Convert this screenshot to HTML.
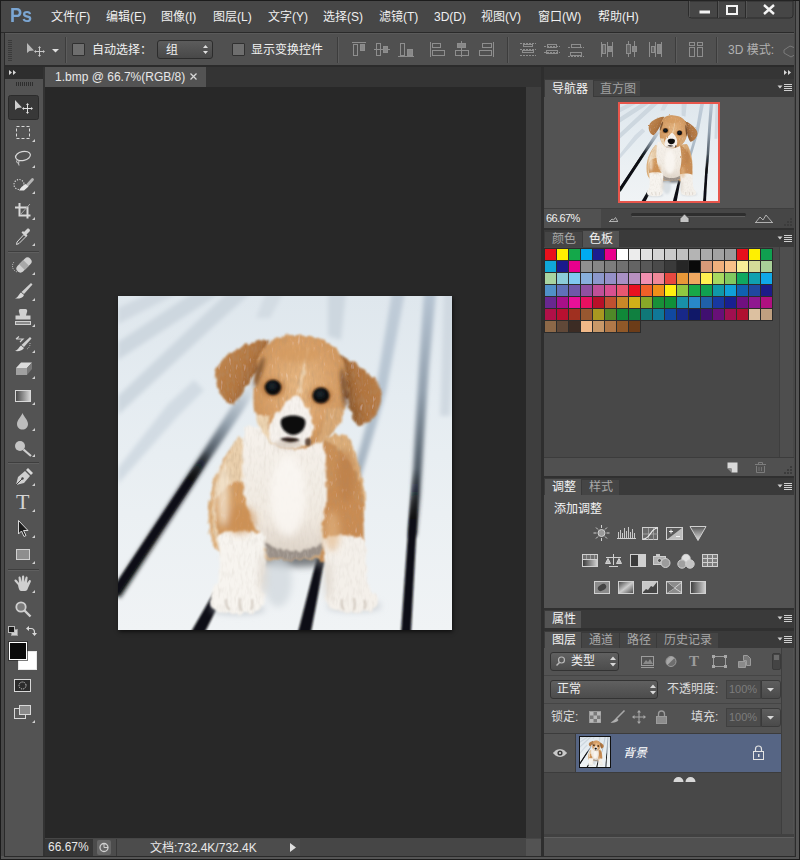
<!DOCTYPE html>
<html lang="zh-CN">
<head>
<meta charset="utf-8">
<title>Photoshop</title>
<style>
html,body{margin:0;padding:0;}
body{width:800px;height:860px;overflow:hidden;background:#474747;position:relative;
 font-family:"Liberation Sans","Noto Sans CJK SC",sans-serif;font-size:12px;color:#e6e6e6;}
.a{position:absolute;}
.t{position:absolute;white-space:nowrap;line-height:16px;}
#win{left:0;top:0;width:800px;height:860px;background:#484848;}
#menubar{left:1px;top:1px;width:798px;height:31px;background:#474747;}
.mi{position:absolute;top:9px;font-size:12px;line-height:16px;color:#f0f0f0;white-space:nowrap;}
#optbar{left:5px;top:33px;width:793px;height:32px;background:#505050;border-top:1px solid #5a5a5a;box-sizing:border-box;}
#canvas{left:45px;top:87px;width:481px;height:751px;background:#282828;}
.tabtxt{color:#b4b4b4;}
.ptabbar{position:absolute;left:545px;width:252px;height:18px;background:#3a3a3a;}
.ptab{position:absolute;top:0;height:18px;background:#535353;color:#f0f0f0;font-size:12px;line-height:18px;text-align:center;}
.ptabi{position:absolute;top:1px;height:17px;background:#434343;color:#a0a0a0;font-size:12px;line-height:17px;text-align:center;}
.pbody{position:absolute;left:545px;width:252px;background:#535353;}
</style>
</head>
<body>
<div id="win" class="a">
 <!-- window edges -->
 <div class="a" style="left:0;top:0;width:800px;height:1px;background:#1c1c1c"></div>
 <div class="a" style="left:0;top:0;width:1px;height:860px;background:#1c1c1c"></div>
 <div class="a" style="left:799px;top:0;width:1px;height:860px;background:#1c1c1c"></div>
 <div class="a" style="left:0;top:859px;width:800px;height:1px;background:#1c1c1c"></div>

 <!-- MENU BAR -->
 <div id="menubar" class="a"></div>
 <div class="t" style="left:10px;top:2px;font-size:21px;line-height:26px;font-weight:bold;color:#7ba6d3;transform-origin:0 0;transform:scaleX(.86)">Ps</div>
 <div class="mi" style="left:51px">文件(F)</div>
 <div class="mi" style="left:106px">编辑(E)</div>
 <div class="mi" style="left:161px">图像(I)</div>
 <div class="mi" style="left:213px">图层(L)</div>
 <div class="mi" style="left:268px">文字(Y)</div>
 <div class="mi" style="left:323px">选择(S)</div>
 <div class="mi" style="left:379px">滤镜(T)</div>
 <div class="mi" style="left:434px">3D(D)</div>
 <div class="mi" style="left:481px">视图(V)</div>
 <div class="mi" style="left:538px">窗口(W)</div>
 <div class="mi" style="left:598px">帮助(H)</div>
 <!-- window controls -->
 

 <div class="a" style="left:1px;top:32px;width:798px;height:1px;background:#2a2a2a"></div>
 <div class="a" style="left:4px;top:33px;width:1px;height:824px;background:#2a2a2a"></div>

 <!-- OPTIONS BAR -->
 <div id="optbar" class="a"></div>
 <div class="a" style="left:5px;top:65px;width:793px;height:2px;background:#2b2b2b"></div>

 <!-- DOC TAB STRIP -->
 <div class="a" style="left:45px;top:67px;width:496px;height:20px;background:#343434"></div>
 <div class="a" style="left:45px;top:67px;width:161px;height:20px;background:#535353"></div>
 <div class="t" style="left:55px;top:69px;color:#e8e8e8;">1.bmp @ 66.7%(RGB/8)</div>

 <!-- TOOLBAR -->
 <div id="tools" class="a" style="left:5px;top:67px;width:38px;height:791px;background:#535353"></div>
 <div class="a" style="left:43px;top:67px;width:2px;height:791px;background:#333"></div>


 <div class="a" style="left:5px;top:67px;width:38px;height:12px;background:#2e2e2e"></div>
 <div class="t" style="left:16px;top:491px;font-family:'Liberation Serif',serif;font-size:22px;line-height:22px;color:#d4d4d4;">T</div>
 <!--TOOLS-->
<svg class="a" id="ticons" style="left:0;top:0;pointer-events:none" width="800" height="860" viewBox="0 0 800 860" fill="none">
<!-- toolbar header >> -->
<path d="M9,70 L12,72.5 L9,75 Z M13,70 L16,72.5 L13,75 Z" fill="#d8d8d8"/>
<!-- grip -->
<g stroke="#2e2e2e" stroke-width="1">
<path d="M16.5,82v4M18.5,82v4M20.5,82v4M22.5,82v4M24.5,82v4M26.5,82v4M28.5,82v4M30.5,82v4M32.5,82v4"/>
</g>
<!-- move tool selected -->
<rect x="8.5" y="95.5" width="30" height="24" rx="2" fill="#383838" stroke="#2b2b2b"/>
<path d="M15,100 L15,110 L17.5,108 L22,107.5 Z" fill="#cfcfcf"/>
<path d="M27.5,104v9M23,108.5h9" stroke="#e0e0e0" stroke-width="1"/>
<path d="M27.5,103 l-1.5,2 h3z M27.5,114 l-1.5,-2 h3z M22,108.5 l2,-1.5 v3z M33,108.5 l-2,-1.5 v3z" fill="#e0e0e0"/>
<!-- sub-tool triangles -->
<g fill="#d0d0d0">
<path d="M35,139v3h-3z"/><path d="M35,165v3h-3z"/><path d="M35,191v3h-3z"/><path d="M35,217v3h-3z"/><path d="M35,243v3h-3z"/>
<path d="M35,272v3h-3z"/><path d="M35,298v3h-3z"/><path d="M35,324v3h-3z"/><path d="M35,350v3h-3z"/><path d="M35,376v3h-3z"/><path d="M35,402v3h-3z"/><path d="M35,428v3h-3z"/><path d="M35,454v3h-3z"/>
<path d="M35,483v3h-3z"/><path d="M35,509v3h-3z"/><path d="M35,535v3h-3z"/><path d="M35,561v3h-3z"/><path d="M35,590v3h-3z"/><path d="M35,720v3h-3z"/>
</g>
<!-- marquee -->
<rect x="16.5" y="126.5" width="13" height="12" stroke="#d8d8d8" stroke-dasharray="3 2"/>
<!-- lasso -->
<ellipse cx="23" cy="156" rx="7.5" ry="4.5" transform="rotate(-12 23 156)" stroke="#d8d8d8" stroke-width="1.2"/>
<path d="M17.5,160 c-1.5,1 -1,3 .5,3 c1.5,0 1.5,-2 0,-2.5 M18.5,163 l.5,2.5" stroke="#d0d0d0" stroke-width="1"/>
<!-- quick select -->
<circle cx="19" cy="184.5" r="5" stroke="#d8d8d8" stroke-width="1.2" stroke-dasharray="1.2 1.4"/>
<path d="M32.5,179.5 L27.5,185" stroke="#b4b4b4" stroke-width="2.8" stroke-linecap="round"/>
<path d="M25.5,184 L28.5,186.5 L24,190.5 L19,190.5 L21.5,187 Z" fill="#e6e6e6"/>
<!-- crop -->
<path d="M19.5,203v12.5h11M15,207.5h12.5v11" stroke="#d8d8d8" stroke-width="2"/>
<path d="M20,215 L30,204" stroke="#aaa" stroke-width="1"/>
<!-- eyedropper -->
<path d="M16.5,244.5 L17,242 L24,234.5 L26,236.5 L19,243.5 Z" stroke="#d8d8d8" stroke-width="1"/>
<path d="M24,232 l3,-3 c1.5,-1.5 4,1 2.5,2.5 l-3,3 l1,1 l-1.5,1.5 l-4.5,-4.5 l1.5,-1.5 Z" fill="#d4d4d4"/>
<!-- separators -->
<g stroke="#3e3e3e"><path d="M8,251.5h31M8,462.5h31M8,569.5h31"/></g>
<g stroke="#5f5f5f"><path d="M8,252.5h31M8,463.5h31M8,570.5h31"/></g>
<!-- heal (bandaid) -->
<g transform="rotate(-45 24 265)"><rect x="15" y="261" width="18" height="8" rx="4" fill="#cfcfcf"/><rect x="21" y="261" width="6" height="8" fill="#a8a8a8"/></g>
<path d="M14,262 a6,6 0 0 0 4,10" stroke="#d0d0d0" stroke-dasharray="1 1.2"/>
<!-- brush -->
<path d="M31,283 L32.5,284.5 L24,294 L21.5,292 Z" fill="#cfcfcf"/>
<path d="M21,292.5 l3,2.5 c-1,3 -5,4 -9,3.5 c3,-1 3.5,-4 6,-6 Z" fill="#d8d8d8"/>
<!-- stamp -->
<path d="M20.5,309 h5 c1.5,0 2,1.5 1.5,3 l-1,3.5 h4.5 v4 h-15 v-4 h4.5 l-1,-3.5 c-.5,-1.5 0,-3 1.5,-3 Z" fill="#cfcfcf"/>
<rect x="15.5" y="321.5" width="15" height="3" fill="#8a8a8a" stroke="#d0d0d0"/>
<!-- history brush -->
<path d="M30,337 L31.5,338.5 L24,347 L21.5,345 Z" fill="#cfcfcf"/>
<path d="M21,345.5 l3,2.5 c-1,2.5 -5,3.5 -9,3 c3,-1 3.5,-3.5 6,-5.5 Z" fill="#d8d8d8"/>
<path d="M16,339 h7 l-3,3 M16,339 l3,-2.5" stroke="#d0d0d0" stroke-width="1.2"/>
<path d="M27,349 a6,6 0 0 0 3,-6" stroke="#c0c0c0" stroke-dasharray="1 1"/>
<!-- eraser -->
<path d="M16,368 L21,362.5 L32,362.5 L27,368 Z" fill="#dcdcdc"/>
<path d="M16,368 H27 V375 H16 Z" fill="#a0a0a0"/>
<path d="M27,368 L32,362.5 V369 L27,375 Z" fill="#787878"/>
<!-- gradient -->
<defs><linearGradient id="tg" x1="0" x2="1"><stop offset="0" stop-color="#444"/><stop offset="1" stop-color="#d8d8d8"/></linearGradient>
<linearGradient id="tg2" x1="0" x2="1"><stop offset="0" stop-color="#e0e0e0"/><stop offset="1" stop-color="#666"/></linearGradient></defs>
<rect x="15.5" y="390.5" width="15" height="11" fill="url(#tg)" stroke="#d8d8d8"/>
<!-- blur drop -->
<path d="M22.5,413 C24,417 28,420 28,424 C28,427.5 25.5,429.5 22.5,429.5 C19.5,429.5 17,427.5 17,424 C17,420 21,417 22.5,413 Z" fill="#bdbdbd"/>
<!-- dodge -->
<circle cx="20" cy="446" r="5" fill="#c4c4c4"/>
<path d="M23.5,449.5 L31,456" stroke="#cfcfcf" stroke-width="2.2"/>
<!-- pen -->
<path d="M16,485 L18,477 L25,471 L30,476 L24,483 Z" fill="#cfcfcf"/>
<path d="M16,485 L22,479" stroke="#444" stroke-width="1"/><circle cx="22.5" cy="478.5" r="1.2" fill="#444"/>
<path d="M26,470 l2,-2 l5,5 l-2,2 Z" fill="#d8d8d8"/>
<!-- path select arrow -->
<path d="M18.5,520.5 V534 L21.5,531 L24,536.5 L26,535.5 L23.5,530.5 H28 Z" fill="#1c1c1c" stroke="#d8d8d8" stroke-width="1"/>
<!-- shape rect -->
<rect x="16.5" y="549.5" width="13" height="10" fill="#8e8e8e" stroke="#d0d0d0"/>
<!-- hand -->
<path d="M18,585 L14.5,581 C14,579.5 16,579 17,580.5 L19,583 L18.5,577.5 C18.5,576 20.5,576 20.7,577.5 L21.5,582 L22,576.5 C22.2,575 24.2,575 24.2,576.5 L24.3,582 L25.5,577.5 C26,576 27.8,576.5 27.6,578 L27,583 L29,580.5 C30,579.5 31.5,580.5 30.7,582 L28,588 C27.5,590 26.5,591 25,591 H21 C19.5,591 18.5,588 18,585 Z" fill="#cfcfcf"/>
<!-- zoom -->
<circle cx="21" cy="607" r="4.7" stroke="#cfcfcf" stroke-width="1.8" fill="#7a7a7a"/>
<path d="M24.5,610.5 L30.5,616.5" stroke="#cfcfcf" stroke-width="2.4"/>
<!-- default colors / swap -->
<rect x="11.5" y="629.5" width="6" height="6" fill="#cfcfcf" stroke="#999"/>
<rect x="8.5" y="626.5" width="6" height="6" fill="#1a1a1a" stroke="#bbb"/>
<path d="M28,628.5 h3 c2.5,0 3.5,2 3.5,4 v1" stroke="#d8d8d8" stroke-width="1.2"/>
<path d="M26,628.5 l3,-2.5 v5 Z M34.5,636 l-2.5,-3 h5 Z" fill="#d8d8d8"/>
<!-- bg / fg colors -->
<rect x="18.5" y="651.5" width="18" height="18" fill="#fff" stroke="#e8e8e8"/>
<rect x="9.5" y="642.5" width="17" height="17" fill="#0a0a0a" stroke="#ffffff" stroke-width="1"/>
<rect x="8.5" y="641.5" width="19" height="19" stroke="#222" stroke-width="1" opacity=".6"/>
<!-- quick mask -->
<rect x="14.5" y="679.5" width="16" height="12" fill="#2b2b2b" stroke="#d8d8d8"/>
<circle cx="22.5" cy="685.5" r="3.5" stroke="#e0e0e0" stroke-dasharray="1 1"/>
<!-- screen mode -->
<rect x="14.5" y="708.5" width="11" height="10" fill="#5a5a5a" stroke="#d8d8d8"/>
<rect x="19.5" y="705.5" width="11" height="9" fill="#8a8a8a" stroke="#d8d8d8"/>
</svg>
<!--/TOOLS-->
 <div class="a" style="left:45px;top:838px;width:496px;height:18px;background:#464646"></div>
 <div class="a" style="left:526px;top:839px;width:15px;height:17px;background:#535353"></div>
 <!-- STATUS BAR -->
 <div class="a" style="left:45px;top:839px;width:255px;height:17px;background:#4c4c4c"></div>
 <div class="a" style="left:45px;top:839px;width:48px;height:17px;background:#363636"></div>
 <div class="a" style="left:116px;top:839px;width:1px;height:17px;background:#383838"></div>
 <div class="t" style="left:48px;top:839px;color:#e8e8e8;">66.67%</div>
 <div class="a" style="left:97px;top:840px;width:14px;height:15px;background:#666;border-radius:2px"></div>
 <div class="t" style="left:150px;top:840px;color:#e8e8e8;">文档:732.4K/732.4K</div>
 <!-- CANVAS -->
 <div id="canvas" class="a"></div>
 <div id="img" class="a" style="left:118px;top:296px;width:334px;height:334px;overflow:hidden;box-shadow:1px 2px 4px rgba(0,0,0,.6)">
<!--PUPPY-->
<svg class="a" style="left:0;top:0" width="334" height="334" viewBox="0 0 334 334">
<defs>
 <linearGradient id="bgG" x1="0" y1="0" x2="0" y2="1">
  <stop offset="0" stop-color="#dfe7ed"/><stop offset="0.3" stop-color="#e5ecf1"/><stop offset="0.65" stop-color="#ebf0f3"/><stop offset="1" stop-color="#f0f3f5"/>
 </linearGradient>
 <filter id="b1" x="-20%" y="-20%" width="140%" height="140%"><feGaussianBlur stdDeviation="0.8"/></filter>
 <filter id="b2" x="-20%" y="-20%" width="140%" height="140%"><feGaussianBlur stdDeviation="2"/></filter>
 <filter id="b3" x="-30%" y="-30%" width="160%" height="160%"><feGaussianBlur stdDeviation="3.5"/></filter>
 <filter id="b6" x="-30%" y="-30%" width="160%" height="160%"><feGaussianBlur stdDeviation="6"/></filter>
 <filter id="fur" x="-10%" y="-10%" width="120%" height="120%">
  <feTurbulence type="fractalNoise" baseFrequency="0.2 0.1" numOctaves="2" seed="4" result="n"/>
  <feDisplacementMap in="SourceGraphic" in2="n" scale="6" xChannelSelector="R" yChannelSelector="G" result="d"/>
  <feGaussianBlur in="d" stdDeviation="1.1" result="g"/>
  <feTurbulence type="fractalNoise" baseFrequency="0.35 0.12" numOctaves="2" seed="11" result="n2"/>
  <feColorMatrix in="n2" type="matrix" values="0 0 0 0 0.42  0 0 0 0 0.28  0 0 0 0 0.16  0.5 0.5 0 0 -0.45" result="n3"/>
  <feComposite in="n3" in2="g" operator="in" result="n4"/>
  <feColorMatrix in="n2" type="matrix" values="0 0 0 0 1  0 0 0 0 0.97  0 0 0 0 0.92  -0.5 -0.5 0 0 0.4" result="n5"/>
  <feComposite in="n5" in2="g" operator="in" result="n6"/>
  <feMerge><feMergeNode in="g"/><feMergeNode in="n4"/><feMergeNode in="n6"/></feMerge>
 </filter>
 <filter id="furw" x="-10%" y="-10%" width="120%" height="120%">
  <feTurbulence type="fractalNoise" baseFrequency="0.2 0.1" numOctaves="2" seed="4" result="n"/>
  <feDisplacementMap in="SourceGraphic" in2="n" scale="6" xChannelSelector="R" yChannelSelector="G" result="d"/>
  <feGaussianBlur in="d" stdDeviation="1.1" result="g"/>
  <feTurbulence type="fractalNoise" baseFrequency="0.35 0.12" numOctaves="2" seed="11" result="n2"/>
  <feColorMatrix in="n2" type="matrix" values="0 0 0 0 0.62  0 0 0 0 0.56  0 0 0 0 0.5  0.4 0.4 0 0 -0.36" result="n3"/>
  <feComposite in="n3" in2="g" operator="in" result="n4"/>
  <feMerge><feMergeNode in="g"/><feMergeNode in="n4"/></feMerge>
 </filter>
 <radialGradient id="eyeG" cx="0.45" cy="0.4" r="0.6"><stop offset="0" stop-color="#1d2a33"/><stop offset="0.6" stop-color="#0b0d10"/><stop offset="1" stop-color="#1a0f08"/></radialGradient>
 <radialGradient id="headG" cx="0.5" cy="0.45" r="0.6"><stop offset="0" stop-color="#e6b783"/><stop offset="0.6" stop-color="#d9a169"/><stop offset="1" stop-color="#c98f55"/></radialGradient>
 <linearGradient id="earL" x1="0" y1="0" x2="1" y2="0.6"><stop offset="0" stop-color="#c48a50"/><stop offset="0.6" stop-color="#b27640"/><stop offset="1" stop-color="#84522a"/></linearGradient>
 <linearGradient id="earR" x1="1" y1="0" x2="0" y2="0.4"><stop offset="0" stop-color="#bc804a"/><stop offset="0.6" stop-color="#b0743e"/><stop offset="1" stop-color="#805028"/></linearGradient>
 <linearGradient id="chestG" x1="0" y1="0" x2="0" y2="1"><stop offset="0" stop-color="#f6f2ec"/><stop offset="0.7" stop-color="#f0e9e0"/><stop offset="1" stop-color="#dcd2c6"/></linearGradient>
 <filter id="b25" x="-30%" y="-30%" width="160%" height="160%"><feGaussianBlur stdDeviation="2.2"/></filter>
 <linearGradient id="l1g" gradientUnits="userSpaceOnUse" x1="0" y1="294" x2="138" y2="85"><stop offset="0" stop-color="#101316"/><stop offset=".5" stop-color="#15181c"/><stop offset=".6" stop-color="#30373e"/><stop offset=".7" stop-color="#65707b"/><stop offset=".8" stop-color="#98a5b1"/><stop offset=".9" stop-color="#bcc7d1"/><stop offset="1" stop-color="#c8d2db" stop-opacity="0"/></linearGradient>
 <linearGradient id="l1s" gradientUnits="userSpaceOnUse" x1="0" y1="294" x2="138" y2="85"><stop offset="0" stop-color="#0d0f12"/><stop offset=".52" stop-color="#0d0f12"/><stop offset=".66" stop-color="#0d0f12" stop-opacity="0"/></linearGradient>
 <linearGradient id="l4g" gradientUnits="userSpaceOnUse" x1="0" y1="0" x2="0" y2="240"><stop offset="0" stop-color="#b6c4d2"/><stop offset=".4" stop-color="#93a1af"/><stop offset=".75" stop-color="#4a5560"/><stop offset="1" stop-color="#15181c"/></linearGradient>
 <linearGradient id="l4s" gradientUnits="userSpaceOnUse" x1="0" y1="150" x2="0" y2="336"><stop offset="0" stop-color="#0d0f12" stop-opacity="0"/><stop offset=".12" stop-color="#0d0f12" stop-opacity="0"/><stop offset=".4" stop-color="#0d0f12"/><stop offset="1" stop-color="#0d0f12"/></linearGradient>
 <linearGradient id="l3g" gradientUnits="userSpaceOnUse" x1="0" y1="0" x2="0" y2="190"><stop offset="0" stop-color="#c0ccd8"/><stop offset=".5" stop-color="#b7c5d2"/><stop offset="1" stop-color="#a3b1be"/></linearGradient>
</defs>
<g id="pup">
<rect width="334" height="334" fill="url(#bgG)"/>
<!-- blurred far planks -->
<g filter="url(#b25)">
 <polygon points="0,12 0,28 62,-4 34,-4" fill="#d0d9e1"/>
 <polygon points="0,46 0,64 104,-4 76,-4" fill="#cdd7df"/>
 <polygon points="0,100 0,119 96,30 134,-4 110,-4" fill="#cdd7df"/>
 <polygon points="0,172 0,188 60,120 86,94 76,84 50,108" fill="#d2dbe3"/>
 <polygon points="148,-4 166,-4 152,22 138,22" fill="#d3dce3"/>
 <polygon points="210,-4 228,-4 223,44 210,40" fill="#cdd7df"/>
 <polygon points="326,-4 338,-4 332,120 322,120" fill="#d0d9e1"/>
</g>
<!-- gap lines: blurred far parts -->
<g filter="url(#b25)">
 <polygon points="-6,296 2,302 90,166 124,116 142,88 134,82 114,110 82,160" fill="url(#l1g)"/>
 <polygon points="306,-4 318,-4 311,70 306,140 302,200 298,240 291,240 294,200 297,140 301,70" fill="url(#l4g)"/>
 <polygon points="274,-4 287,-4 268,96 252,150 240,190 232,186 243,148 258,92" fill="url(#l3g)"/>
</g>
<!-- sharp near gap lines -->
<g filter="url(#b1)">
 <polygon points="-2,288 -2,302 98,152 92,147" fill="url(#l1s)"/>
 <polygon points="296,150 303,150 293,336 283,336" fill="url(#l4s)"/>
 <polygon points="73,336 87,336 105,300 96,296" fill="#0d0f12"/>
 <polygon points="180,336 193,336 207,262 199,262" fill="#0d0f12"/>
</g>
<!-- ground shadow under dog -->
<g filter="url(#b3)">
 <ellipse cx="176" cy="262" rx="46" ry="9" fill="#5e6166" opacity="0.8"/>
 <ellipse cx="120" cy="313" rx="27" ry="5" fill="#b4bcc3" opacity="0.8"/>
 <ellipse cx="236" cy="310" rx="27" ry="5" fill="#b4bcc3" opacity="0.8"/>
 <ellipse cx="160" cy="285" rx="14" ry="26" fill="#cfd6dc" opacity="0.7"/>
</g>
<!-- DOG BODY -->
<g filter="url(#fur)">
 <path d="M114,150 C98,172 88,200 91,232 C93,252 102,262 118,264 L234,262 C246,248 250,215 245,188 C241,166 236,150 228,138 Z" fill="#dcae7a"/>
 <path d="M200,140 C225,150 240,172 245,200 C248,230 246,256 240,266 L202,266 C208,240 206,190 198,160 Z" fill="#c98f56"/>
 <path d="M120,140 C104,165 93,198 95,230 C97,250 104,260 114,262 L140,262 C132,230 132,180 140,150 Z" fill="#e9cfac"/>
 <path d="M98,205 C102,188 124,180 142,190 C150,200 150,225 146,242 L101,242 C97,230 96,215 98,205 Z" fill="#d39a5e"/>
 <path d="M204,196 C222,190 240,198 245,220 C247,232 247,240 246,246 L206,246 C204,228 203,210 204,196 Z" fill="#c98c52"/>
</g>
<g filter="url(#furw)">
 <path d="M128,130 C122,160 122,200 134,225 C142,238 146,246 148,254 C160,262 190,262 204,254 C206,244 204,236 204,228 C212,200 210,170 204,140 Z" fill="url(#chestG)"/>
 <path d="M148,246 C160,258 190,258 204,247 L204,258 C190,265 160,265 148,260 Z" fill="#9a9088"/>
 <path d="M100,238 C116,232 136,234 147,240 C147,266 145,282 143,292 C148,302 146,312 138,316 C120,320 100,318 93,311 C90,302 94,294 100,288 C102,272 100,256 100,238 Z" fill="#f7f4ef"/>
 <path d="M205,242 C218,238 236,238 247,244 C247,270 249,286 253,294 C262,302 262,311 254,314 C236,318 216,316 210,310 C206,300 208,290 209,284 C207,270 205,256 205,242 Z" fill="#f4f0ea"/>
</g>
<!-- body shading -->
<g filter="url(#b3)">
 <ellipse cx="228" cy="180" rx="9" ry="26" fill="#b87a42" opacity="0.55"/>
 <ellipse cx="214" cy="235" rx="8" ry="20" fill="#e2b684" opacity="0.6"/>
 <ellipse cx="122" cy="224" rx="16" ry="14" fill="#c98c50" opacity="0.6"/>
 <ellipse cx="170" cy="200" rx="18" ry="40" fill="#fbf8f4" opacity="0.8"/>
 <ellipse cx="105" cy="200" rx="6" ry="30" fill="#f4e6d2" opacity="0.8"/>
 <ellipse cx="145" cy="278" rx="4" ry="22" fill="#d8d0c6" opacity="0.7"/>
 <ellipse cx="210" cy="284" rx="4" ry="20" fill="#d8d0c6" opacity="0.7"/>
</g>
<!-- paw toes -->
<g filter="url(#b1)" stroke="#b9aea2" stroke-width="1.2" fill="none">
 <path d="M108,303 C108,309 110,313 112,314"/><path d="M122,302 C121,309 122,313 124,315"/><path d="M134,303 C135,309 134,312 133,314"/>
 <path d="M224,303 C223,309 224,312 226,314"/><path d="M236,302 C237,309 237,312 236,314"/><path d="M246,304 C248,308 248,311 246,313"/>
</g>
<!-- HEAD -->
<g filter="url(#fur)">
 <path d="M149,44 C138,44 122,50 108,60 C98,68 96,80 99,90 C102,100 108,106 115,108 C124,98 134,84 141,68 C144,58 148,50 151,44 Z" fill="url(#earL)"/>
 <path d="M220,58 C232,62 248,74 258,86 C266,96 266,106 258,118 C252,126 246,130 240,130 C234,122 230,110 228,96 C226,82 224,70 220,58 Z" fill="url(#earR)"/>
 <path d="M178,39 C160,38 146,46 141,62 C137,78 134,98 136,114 C139,130 148,144 160,150 C172,154 186,154 196,148 C212,140 226,124 228,104 C230,84 228,66 220,56 C210,44 196,40 178,39 Z" fill="url(#headG)"/>
 <path d="M137,118 C139,132 148,145 162,151 C153,140 149,130 150,120 Z" fill="#ecd3b0"/>
 <path d="M227,112 C223,130 211,142 198,148 C204,134 208,124 208,112 Z" fill="#d8a874"/>
 <path d="M190,52 C188,66 185,84 182,98 L179,100 C181,86 186,66 189,52 Z" fill="#ecd0ac"/>
</g>
<g filter="url(#furw)">
 <path d="M178,98 C184,104 194,114 195,128 C196,140 190,148 182,151 C170,154 158,152 153,144 C149,136 152,124 160,116 C166,110 172,102 178,98 Z" fill="#f6f2ed"/>
</g>
<g filter="url(#b2)">
 <ellipse cx="141" cy="76" rx="3" ry="16" transform="rotate(18 141 76)" fill="#6a4122" opacity="0.75"/>
 <ellipse cx="226" cy="92" rx="2.5" ry="20" transform="rotate(-6 226 92)" fill="#5c391f" opacity="0.8"/>
 <ellipse cx="155" cy="92" rx="12" ry="10" fill="#b5753c" opacity="0.65"/>
 <ellipse cx="203" cy="100" rx="12" ry="10" fill="#b5753c" opacity="0.65"/>
 <ellipse cx="180" cy="58" rx="22" ry="8" fill="#d49a5e" opacity="0.6"/>
 <ellipse cx="170" cy="148" rx="14" ry="4" fill="#cdbfb0" opacity="0.7"/>
</g>
<g filter="url(#b1)">
 <ellipse cx="155" cy="91.5" rx="8.3" ry="7.8" fill="url(#eyeG)"/>
 <ellipse cx="203" cy="99.5" rx="8.5" ry="8" fill="url(#eyeG)"/>
 <path d="M163,124 C166,118 184,118 187,124 C189,130 184,138 176,139 C168,139 161,131 163,124 Z" fill="#0c0a0a"/>
 <path d="M162,143 C168,141 176,141 182,144 C176,147 168,147 162,143 Z" fill="#2a1c18"/>
 <ellipse cx="190" cy="146" rx="3" ry="4" fill="#4a3a30" opacity="0.8"/>
</g>
</g>
</svg>
<!--/PUPPY-->
 </div>
 <div class="a" style="left:526px;top:87px;width:15px;height:751px;background:#3e3e3e"></div>
 <div class="a" style="left:541px;top:67px;width:3px;height:791px;background:#2e2e2e"></div>

 <!--OPT-->
 <div class="t" style="left:92px;top:42px;color:#f0f0f0;">自动选择：</div>
 <div class="a" style="left:72px;top:43px;width:13px;height:13px;box-sizing:border-box;border:1px solid #303030;background:#6e6e6e;border-radius:1px"></div>
 <div class="a" style="left:157px;top:40px;width:56px;height:19px;box-sizing:border-box;border:1px solid #2c2c2c;border-radius:3px;background:linear-gradient(#5c5c5c,#484848)"></div>
 <div class="t" style="left:166px;top:42px;color:#f0f0f0;">组</div>
 <div class="a" style="left:232px;top:43px;width:13px;height:13px;box-sizing:border-box;border:1px solid #303030;background:#6e6e6e;border-radius:1px"></div>
 <div class="t" style="left:251px;top:42px;color:#f0f0f0;">显示变换控件</div>
 <div class="t" style="left:728px;top:42px;color:#b0b0b0;">3D 模式:</div>
 <svg class="a" style="left:0;top:0" width="800" height="860" viewBox="0 0 800 860" fill="none">
  <!-- grip -->
  <path d="M8,40.5h4M8,42.5h4M8,44.5h4M8,46.5h4M8,48.5h4M8,50.5h4M8,52.5h4M8,54.5h4M8,56.5h4M8,58.5h4M8,60.5h4" stroke="#3a3a3a"/>
  <!-- move icon -->
  <path d="M27,43 L27,53 L29.5,51 L34,50.5 Z" fill="#b8b8b8"/>
  <path d="M39.5,47v9M35,51.5h9" stroke="#c8c8c8"/>
  <path d="M39.5,46 l-1.5,2 h3z M39.5,57 l-1.5,-2 h3z M34,51.5 l2,-1.5 v3z M45,51.5 l-2,-1.5 v3z" fill="#c8c8c8"/>
  <path d="M52,49 h7 l-3.5,3.5 Z" fill="#e0e0e0"/>
  <g stroke="#3c3c3c"><path d="M65.5,37v26M337.5,37v26M507.5,37v26M675.5,37v26M716.5,37v26"/></g>
  <g stroke="#5c5c5c"><path d="M66.5,37v26M338.5,37v26M508.5,37v26M676.5,37v26M717.5,37v26"/></g>
  <!-- combo arrows -->
  <path d="M203,48 l2.5,-3 l2.5,3 Z M203,51 l2.5,3 l2.5,-3 Z" fill="#e0e0e0"/>
  <!-- align icons -->
  <g stroke="#8e8e8e" fill="none">
   <path d="M352,42.5h14"/><rect x="353.5" y="44.5" width="4" height="11"/><rect x="360.5" y="44.5" width="4" height="6" fill="#888"/>
   <path d="M374,49.5h16"/><rect x="376.5" y="43.5" width="4" height="12"/><rect x="383.5" y="46.5" width="4" height="6" fill="#888"/>
   <path d="M398,56.5h16"/><rect x="400.5" y="43.5" width="4" height="12"/><rect x="407.5" y="49.5" width="5" height="6" fill="#888"/>
   <path d="M430.5,42v15"/><rect x="432.5" y="43.5" width="8" height="4"/><rect x="432.5" y="50.5" width="12" height="5"/>
   <path d="M461.5,41v16"/><rect x="457.5" y="43.5" width="8" height="4" fill="#888"/><rect x="455.5" y="50.5" width="13" height="5"/>
   <path d="M493.5,42v15"/><rect x="482.5" y="43.5" width="9" height="4"/><rect x="479.5" y="50.5" width="12" height="5"/>
   <path d="M520,43.5h16M520,49.5h16M520,55.5h16" stroke-dasharray="2 1"/><rect x="523.5" y="44.5" width="9" height="2"/><rect x="522.5" y="50.5" width="11" height="2"/>
   <path d="M544,46.5h16M544,52.5h16" stroke-dasharray="2 1"/><rect x="547.5" y="44.5" width="9" height="3"/><rect x="546.5" y="50.5" width="11" height="3"/>
   <path d="M568,47.5h16M568,56.5h16" stroke-dasharray="2 1"/><rect x="571.5" y="44.5" width="9" height="3"/><rect x="570.5" y="52.5" width="11" height="3"/>
   <path d="M601.5,42v15M607.5,42v15M612.5,42v15"/><rect x="602.5" y="44.5" width="3" height="9" fill="#666"/><rect x="608.5" y="46.5" width="3" height="5" fill="#888"/>
   <path d="M628.5,41v16M634.5,41v16"/><rect x="626.5" y="44.5" width="4" height="9" fill="#666"/><rect x="632.5" y="46.5" width="4" height="5" fill="#888"/>
   <path d="M649.5,42v15M655.5,42v15M661.5,42v15"/><rect x="651.5" y="46.5" width="3" height="6" fill="#666"/><rect x="657.5" y="44.5" width="3" height="9" fill="#888"/>
   <rect x="689.5" y="42.5" width="5" height="3"/><rect x="697.5" y="42.5" width="5" height="3"/><rect x="689.5" y="47.5" width="5" height="9"/><rect x="697.5" y="47.5" width="5" height="9"/>
   <path d="M784,50 l6,-4 l8,3 v4 l-7,4 l-7,-4 Z" stroke="#7a7a7a"/>
  </g>
  <!-- tab close x -->
  <path d="M190.5,73.5 l6,6 M196.5,73.5 l-6,6" stroke="#d8d8d8" stroke-width="1.3"/>
  <!-- status bar bits -->
  <path d="M290,843 v9 l6,-4.5 Z" fill="#e0e0e0"/>
  <circle cx="104" cy="847.5" r="4" stroke="#d0d0d0" stroke-width="1.3"/><path d="M104,843.5v4h4" stroke="#d0d0d0"/>
  <!-- window controls -->
  <path d="M688.5,1 V15 a3,3 0 0 0 3,3 H790 a3,3 0 0 0 3,-3 V1 Z" fill="#464646" stroke="#2c2c2c"/>
  <path d="M717.5,1v17M745.5,1v17" stroke="#2a2a2a"/>
  <path d="M718.5,1v17M746.5,1v17M689.5,1v16" stroke="#555"/>
  <rect x="699.5" y="10.5" width="10.5" height="3" fill="#f4f4f4"/>
  <rect x="727" y="6" width="10" height="8" stroke="#f4f4f4" stroke-width="2"/>
  <path d="M764,5 l10,9 M774,5 l-10,9" stroke="#f4f4f4" stroke-width="2.4"/>
 </svg>
 <!--/OPT-->
 <!-- RIGHT PANELS -->
 <div id="rp" class="a" style="left:544px;top:67px;width:254px;height:791px;background:#535353"></div>
 <!--RP-->
 <div class="a" style="left:544px;top:67px;width:250px;height:12px;background:#353535"></div>
 <div class="a" style="left:794px;top:1px;width:5px;height:856px;background:#555"></div>
 <div class="a" style="left:794px;top:1px;width:1px;height:856px;background:#484848"></div>
 <div class="a" style="left:795px;top:1px;width:1px;height:856px;background:#2c2c2c"></div>
 <!-- navigator -->
 <div class="a" style="left:544px;top:79px;width:250px;height:18px;background:#3a3a3a"></div>
 <div class="a" style="left:545px;top:80px;width:48px;height:17px;background:#535353"></div>
 <div class="a" style="left:594px;top:81px;width:46px;height:15px;background:#454545"></div>
 <div class="t" style="left:552px;top:81px;color:#f4f4f4;">导航器</div>
 <div class="t" style="left:600px;top:81px;color:#a0a0a0;">直方图</div>
 <div class="a" style="left:544px;top:97px;width:250px;height:131px;background:#535353"></div>
 <div id="nav" class="a" style="left:618px;top:102px;width:102px;height:101px;box-sizing:border-box;border:2px solid #e8564c;overflow:hidden;background:#dfe8ee"><svg width="98" height="97" viewBox="0 0 334 334" preserveAspectRatio="none" style="display:block"><use href="#pup"/></svg></div>
 <div class="a" style="left:544px;top:208px;width:250px;height:1px;background:#3e3e3e"></div>
 <div class="a" style="left:544px;top:209px;width:250px;height:19px;background:#464646"></div>
 <div class="a" style="left:544px;top:209px;width:57px;height:19px;background:#515151"></div>
 <div class="t" style="left:546px;top:210px;font-size:11px;letter-spacing:-.6px;color:#f0f0f0;">66.67%</div>
 <!-- gap -->
 <div class="a" style="left:544px;top:228px;width:250px;height:2px;background:#303030"></div>
 <!-- swatches -->
 <div class="a" style="left:544px;top:230px;width:250px;height:17px;background:#3a3a3a"></div>
 <div class="a" style="left:545px;top:232px;width:37px;height:15px;background:#454545"></div>
 <div class="a" style="left:583px;top:231px;width:36px;height:16px;background:#535353"></div>
 <div class="t" style="left:552px;top:231px;color:#a8a8a8;">颜色</div>
 <div class="t" style="left:589px;top:231px;color:#f4f4f4;">色板</div>
 <div class="a" style="left:544px;top:247px;width:250px;height:210px;background:#484848"></div>
 <div class="a" style="left:544px;top:458px;width:250px;height:18px;background:#505050"></div>
 <div class="a" style="left:779px;top:247px;width:14px;height:210px;background:#4e4e4e;border-left:1px solid #3e3e3e;box-sizing:border-box"></div>
 <div class="a" style="left:544px;top:457px;width:250px;height:1px;background:#3c3c3c"></div>
 <div id="sw" class="a" style="left:544px;top:248px;width:230px;height:86px;">
<svg class="a" style="left:0;top:0" width="230" height="86" viewBox="0 0 230 86" shape-rendering="crispEdges">
<rect x="0" y="0" width="229" height="73" fill="#2c2c2c"/><rect x="0" y="73" width="97" height="12" fill="#2c2c2c"/>
<rect x="1" y="1" width="11" height="11" fill="#e8101c"/>
<rect x="13" y="1" width="11" height="11" fill="#fff000"/>
<rect x="25" y="1" width="11" height="11" fill="#14a84a"/>
<rect x="37" y="1" width="11" height="11" fill="#00aaf0"/>
<rect x="49" y="1" width="11" height="11" fill="#1c1c90"/>
<rect x="61" y="1" width="11" height="11" fill="#e8008c"/>
<rect x="73" y="1" width="11" height="11" fill="#ffffff"/>
<rect x="85" y="1" width="11" height="11" fill="#ececec"/>
<rect x="97" y="1" width="11" height="11" fill="#e0e0e0"/>
<rect x="109" y="1" width="11" height="11" fill="#d4d4d4"/>
<rect x="121" y="1" width="11" height="11" fill="#cacaca"/>
<rect x="133" y="1" width="11" height="11" fill="#c0c0c0"/>
<rect x="145" y="1" width="11" height="11" fill="#b4b4b4"/>
<rect x="157" y="1" width="11" height="11" fill="#aaaaaa"/>
<rect x="169" y="1" width="11" height="11" fill="#a2a2a2"/>
<rect x="181" y="1" width="11" height="11" fill="#9a9a9a"/>
<rect x="193" y="1" width="11" height="11" fill="#e6101c"/>
<rect x="205" y="1" width="11" height="11" fill="#fff000"/>
<rect x="217" y="1" width="11" height="11" fill="#10a050"/>
<rect x="1" y="13" width="11" height="11" fill="#10a8d8"/>
<rect x="13" y="13" width="11" height="11" fill="#1a1a8c"/>
<rect x="25" y="13" width="11" height="11" fill="#e8008c"/>
<rect x="37" y="13" width="11" height="11" fill="#909090"/>
<rect x="49" y="13" width="11" height="11" fill="#868686"/>
<rect x="61" y="13" width="11" height="11" fill="#7c7c7c"/>
<rect x="73" y="13" width="11" height="11" fill="#707070"/>
<rect x="85" y="13" width="11" height="11" fill="#646464"/>
<rect x="97" y="13" width="11" height="11" fill="#585858"/>
<rect x="109" y="13" width="11" height="11" fill="#4a4a4a"/>
<rect x="121" y="13" width="11" height="11" fill="#3a3a3a"/>
<rect x="133" y="13" width="11" height="11" fill="#262626"/>
<rect x="145" y="13" width="11" height="11" fill="#0a0a0a"/>
<rect x="157" y="13" width="11" height="11" fill="#d89a78"/>
<rect x="169" y="13" width="11" height="11" fill="#f0b07c"/>
<rect x="181" y="13" width="11" height="11" fill="#f8c088"/>
<rect x="193" y="13" width="11" height="11" fill="#f8ee98"/>
<rect x="205" y="13" width="11" height="11" fill="#d4dc98"/>
<rect x="217" y="13" width="11" height="11" fill="#a8d098"/>
<rect x="1" y="25" width="11" height="11" fill="#a8d4a0"/>
<rect x="13" y="25" width="11" height="11" fill="#8ccbd8"/>
<rect x="25" y="25" width="11" height="11" fill="#80c8f0"/>
<rect x="37" y="25" width="11" height="11" fill="#88b0dc"/>
<rect x="49" y="25" width="11" height="11" fill="#8c98cc"/>
<rect x="61" y="25" width="11" height="11" fill="#9490c8"/>
<rect x="73" y="25" width="11" height="11" fill="#a890c4"/>
<rect x="85" y="25" width="11" height="11" fill="#b890c0"/>
<rect x="97" y="25" width="11" height="11" fill="#f090b0"/>
<rect x="109" y="25" width="11" height="11" fill="#f08898"/>
<rect x="121" y="25" width="11" height="11" fill="#e84840"/>
<rect x="133" y="25" width="11" height="11" fill="#e89838"/>
<rect x="145" y="25" width="11" height="11" fill="#f0a860"/>
<rect x="157" y="25" width="11" height="11" fill="#fff050"/>
<rect x="169" y="25" width="11" height="11" fill="#a8d860"/>
<rect x="181" y="25" width="11" height="11" fill="#80c860"/>
<rect x="193" y="25" width="11" height="11" fill="#10a860"/>
<rect x="205" y="25" width="11" height="11" fill="#10a0b0"/>
<rect x="217" y="25" width="11" height="11" fill="#10a8e8"/>
<rect x="1" y="37" width="11" height="11" fill="#5090c8"/>
<rect x="13" y="37" width="11" height="11" fill="#6070b8"/>
<rect x="25" y="37" width="11" height="11" fill="#7058a8"/>
<rect x="37" y="37" width="11" height="11" fill="#9050a0"/>
<rect x="49" y="37" width="11" height="11" fill="#c05098"/>
<rect x="61" y="37" width="11" height="11" fill="#d85090"/>
<rect x="73" y="37" width="11" height="11" fill="#e85870"/>
<rect x="85" y="37" width="11" height="11" fill="#e81020"/>
<rect x="97" y="37" width="11" height="11" fill="#f06028"/>
<rect x="109" y="37" width="11" height="11" fill="#f09018"/>
<rect x="121" y="37" width="11" height="11" fill="#fff010"/>
<rect x="133" y="37" width="11" height="11" fill="#90c840"/>
<rect x="145" y="37" width="11" height="11" fill="#18a848"/>
<rect x="157" y="37" width="11" height="11" fill="#10a050"/>
<rect x="169" y="37" width="11" height="11" fill="#1098a8"/>
<rect x="181" y="37" width="11" height="11" fill="#10a0d8"/>
<rect x="193" y="37" width="11" height="11" fill="#1060b0"/>
<rect x="205" y="37" width="11" height="11" fill="#2048a0"/>
<rect x="217" y="37" width="11" height="11" fill="#1c1c88"/>
<rect x="1" y="49" width="11" height="11" fill="#682890"/>
<rect x="13" y="49" width="11" height="11" fill="#a81088"/>
<rect x="25" y="49" width="11" height="11" fill="#e81098"/>
<rect x="37" y="49" width="11" height="11" fill="#e81060"/>
<rect x="49" y="49" width="11" height="11" fill="#b81028"/>
<rect x="61" y="49" width="11" height="11" fill="#c05030"/>
<rect x="73" y="49" width="11" height="11" fill="#c88828"/>
<rect x="85" y="49" width="11" height="11" fill="#d0b018"/>
<rect x="97" y="49" width="11" height="11" fill="#88a828"/>
<rect x="109" y="49" width="11" height="11" fill="#189038"/>
<rect x="121" y="49" width="11" height="11" fill="#109038"/>
<rect x="133" y="49" width="11" height="11" fill="#1890a8"/>
<rect x="145" y="49" width="11" height="11" fill="#2888c8"/>
<rect x="157" y="49" width="11" height="11" fill="#2060a8"/>
<rect x="169" y="49" width="11" height="11" fill="#1838a0"/>
<rect x="181" y="49" width="11" height="11" fill="#182090"/>
<rect x="193" y="49" width="11" height="11" fill="#701080"/>
<rect x="205" y="49" width="11" height="11" fill="#901890"/>
<rect x="217" y="49" width="11" height="11" fill="#b01080"/>
<rect x="1" y="61" width="11" height="11" fill="#b01048"/>
<rect x="13" y="61" width="11" height="11" fill="#b81030"/>
<rect x="25" y="61" width="11" height="11" fill="#a03020"/>
<rect x="37" y="61" width="11" height="11" fill="#985830"/>
<rect x="49" y="61" width="11" height="11" fill="#a89820"/>
<rect x="61" y="61" width="11" height="11" fill="#508828"/>
<rect x="73" y="61" width="11" height="11" fill="#108838"/>
<rect x="85" y="61" width="11" height="11" fill="#108040"/>
<rect x="97" y="61" width="11" height="11" fill="#107878"/>
<rect x="109" y="61" width="11" height="11" fill="#107898"/>
<rect x="121" y="61" width="11" height="11" fill="#1048a0"/>
<rect x="133" y="61" width="11" height="11" fill="#182888"/>
<rect x="145" y="61" width="11" height="11" fill="#101868"/>
<rect x="157" y="61" width="11" height="11" fill="#401070"/>
<rect x="169" y="61" width="11" height="11" fill="#681078"/>
<rect x="181" y="61" width="11" height="11" fill="#a01050"/>
<rect x="193" y="61" width="11" height="11" fill="#b01030"/>
<rect x="205" y="61" width="11" height="11" fill="#dcc0a0"/>
<rect x="217" y="61" width="11" height="11" fill="#c0a080"/>
<rect x="1" y="73" width="11" height="11" fill="#8c6848"/>
<rect x="13" y="73" width="11" height="11" fill="#604838"/>
<rect x="25" y="73" width="11" height="11" fill="#3c2c24"/>
<rect x="37" y="73" width="11" height="11" fill="#f0b888"/>
<rect x="49" y="73" width="11" height="11" fill="#c89868"/>
<rect x="61" y="73" width="11" height="11" fill="#b07848"/>
<rect x="73" y="73" width="11" height="11" fill="#905828"/>
<rect x="85" y="73" width="11" height="11" fill="#6c3c18"/>
</svg>
</div>
 <div class="a" style="left:544px;top:476px;width:250px;height:2px;background:#303030"></div>
 <!-- adjustments -->
 <div class="a" style="left:544px;top:478px;width:250px;height:17px;background:#3a3a3a"></div>
 <div class="a" style="left:545px;top:479px;width:36px;height:16px;background:#535353"></div>
 <div class="a" style="left:582px;top:480px;width:37px;height:15px;background:#454545"></div>
 <div class="t" style="left:552px;top:479px;color:#f4f4f4;">调整</div>
 <div class="t" style="left:589px;top:479px;color:#a8a8a8;">样式</div>
 <div class="a" style="left:544px;top:495px;width:250px;height:113px;background:#535353"></div>
 <div class="t" style="left:554px;top:501px;color:#f4f4f4;">添加调整</div>
 <div class="a" style="left:544px;top:608px;width:250px;height:2px;background:#303030"></div>
 <!-- properties -->
 <div class="a" style="left:544px;top:610px;width:250px;height:18px;background:#3a3a3a"></div>
 <div class="a" style="left:545px;top:611px;width:36px;height:17px;background:#535353"></div>
 <div class="t" style="left:552px;top:611px;color:#f4f4f4;">属性</div>
 <div class="a" style="left:544px;top:628px;width:250px;height:3px;background:#303030"></div>
 <!-- layers -->
 <div class="a" style="left:544px;top:631px;width:250px;height:17px;background:#3a3a3a"></div>
 <div class="a" style="left:545px;top:632px;width:36px;height:16px;background:#535353"></div>
 <div class="a" style="left:582px;top:633px;width:37px;height:15px;background:#454545"></div>
 <div class="a" style="left:620px;top:633px;width:36px;height:15px;background:#454545"></div>
 <div class="a" style="left:657px;top:633px;width:61px;height:15px;background:#454545"></div>
 <div class="t" style="left:552px;top:632px;color:#f4f4f4;">图层</div>
 <div class="t" style="left:589px;top:632px;color:#a8a8a8;">通道</div>
 <div class="t" style="left:627px;top:632px;color:#a8a8a8;">路径</div>
 <div class="t" style="left:664px;top:632px;color:#a8a8a8;">历史记录</div>
 <div class="a" style="left:544px;top:648px;width:250px;height:188px;background:#535353"></div>
 <div class="a" style="left:544px;top:773px;width:237px;height:63px;background:#484848"></div>
 <div class="a" style="left:550px;top:652px;width:69px;height:19px;box-sizing:border-box;border:1px solid #333;border-radius:3px;background:linear-gradient(#606060,#4c4c4c)"></div>
 <div class="t" style="left:571px;top:653px;color:#ededed;">类型</div>
 <div class="a" style="left:544px;top:675px;width:237px;height:1px;background:#454545"></div>
 <div class="a" style="left:550px;top:680px;width:108px;height:19px;box-sizing:border-box;border:1px solid #333;border-radius:3px;background:linear-gradient(#606060,#4c4c4c)"></div>
 <div class="t" style="left:557px;top:681px;color:#ededed;">正常</div>
 <div class="t" style="left:667px;top:681px;color:#dcdcdc;">不透明度:</div>
 <div class="a" style="left:726px;top:680px;width:35px;height:19px;box-sizing:border-box;border:1px solid #404040;background:#4c4c4c"></div>
 <div class="t" style="left:729px;top:681px;color:#7c7c7c;font-size:11px">100%</div>
 <div class="a" style="left:761px;top:680px;width:20px;height:19px;box-sizing:border-box;border:1px solid #3a3a3a;border-radius:0 3px 3px 0;background:linear-gradient(#5e5e5e,#4a4a4a)"></div>
 <div class="a" style="left:544px;top:703px;width:237px;height:1px;background:#454545"></div>
 <div class="t" style="left:551px;top:709px;color:#dcdcdc;">锁定:</div>
 <div class="t" style="left:691px;top:709px;color:#dcdcdc;">填充:</div>
 <div class="a" style="left:726px;top:708px;width:35px;height:19px;box-sizing:border-box;border:1px solid #404040;background:#4c4c4c"></div>
 <div class="t" style="left:729px;top:709px;color:#7c7c7c;font-size:11px">100%</div>
 <div class="a" style="left:761px;top:708px;width:20px;height:19px;box-sizing:border-box;border:1px solid #3a3a3a;border-radius:0 3px 3px 0;background:linear-gradient(#5e5e5e,#4a4a4a)"></div>
 <div class="a" style="left:544px;top:733px;width:237px;height:1px;background:#3c3c3c"></div>
 <div class="a" style="left:576px;top:734px;width:205px;height:38px;background:#566584"></div>
 <div class="a" style="left:575px;top:734px;width:1px;height:38px;background:#3c3c3c"></div>
 <div class="a" style="left:544px;top:772px;width:237px;height:1px;background:#3c3c3c"></div>
 <div id="lth" class="a" style="left:579px;top:736px;width:32px;height:32px;box-sizing:border-box;border:1px solid #111;overflow:hidden;background:#dfe8ee"><svg width="30" height="30" viewBox="0 0 334 334" style="display:block"><use href="#pup"/></svg></div>
 <div class="t" style="left:623px;top:745px;color:#fff;font-style:italic;">背景</div>
 <div class="a" style="left:781px;top:648px;width:12px;height:188px;background:#4e4e4e;border-left:1px solid #3e3e3e;box-sizing:border-box"></div>
 <div class="a" style="left:544px;top:834px;width:250px;height:3px;background:#414141"></div>
 <div class="a" style="left:544px;top:837px;width:250px;height:1px;background:#606060"></div>
 <div class="a" style="left:544px;top:838px;width:250px;height:18px;background:#505050"></div>
 <div class="a" style="left:1px;top:856px;width:798px;height:3px;background:#555"></div>
 <div class="a" style="left:4px;top:856px;width:792px;height:1px;background:#2a2a2a"></div>
 <!--/RP-->
 <!--RPI-->
 <svg class="a" style="left:0;top:0;pointer-events:none" width="800" height="860" viewBox="0 0 800 860" fill="none">
  <defs>
   <linearGradient id="ig1" x1="0" x2="1"><stop offset="0" stop-color="#3c3c3c"/><stop offset="1" stop-color="#d0d0d0"/></linearGradient>
   <linearGradient id="ig2" x1="0" y1="0" x2="1" y2="1"><stop offset="0" stop-color="#444"/><stop offset=".5" stop-color="#ccc"/><stop offset="1" stop-color="#444"/></linearGradient>
   <linearGradient id="ig3" x1="0" y1="0" x2="0" y2="1"><stop offset="0" stop-color="#555"/><stop offset="1" stop-color="#e0e0e0"/></linearGradient>
  </defs>
  <!-- >> collapse -->
  <path d="M784,70 L787,72.5 L784,75 Z M788,70 L791,72.5 L788,75 Z" fill="#d8d8d8"/>
  <!-- panel menus -->
  <g id="pm"><path d="M777.5,85.5 h5 l-2.5,3 Z" fill="#d0d0d0"/><path d="M784,84.5h8M784,86.5h8M784,88.5h8M784,90.5h8" stroke="#d0d0d0"/></g>
  <use href="#pm" y="151"/><use href="#pm" y="399"/><use href="#pm" y="531"/><use href="#pm" y="552"/>
  <!-- navigator slider -->
  <path d="M609,221.5 h9 M610,221 l2,-2 l1.5,1 l2,-2.5 l2,3.5" stroke="#b0b0b0"/>
  <rect x="631" y="213" width="115" height="3" rx="1.5" fill="#2e2e2e"/><path d="M632,216.5 h113" stroke="#5e5e5e"/>
  <path d="M684.5,214 l4.5,4.5 v4 h-9 v-4 Z" fill="#c4c4c4" stroke="#333" stroke-width=".8"/>
  <path d="M755,222.5 h18 M756,222 l4,-5 l3,3 l3,-5 l6,7" stroke="#b0b0b0"/>
  <g fill="#3c3c3c"><rect x="790" y="224" width="2" height="2"/><rect x="787" y="224" width="2" height="2"/><rect x="784" y="224" width="2" height="2"/><rect x="790" y="221" width="2" height="2"/><rect x="787" y="221" width="2" height="2"/><rect x="790" y="218" width="2" height="2"/></g>
  <!-- swatches footer icons -->
  <path d="M727.5,462.5 h10 v10 h-6 v-4 h-4 Z" fill="#d8d8d8"/><path d="M727.5,468.5 h4 v4 Z" fill="#8a8a8a"/>
  <path d="M755,464.5 h11 M758.5,464 v-1.5 h4 v1.5" stroke="#7c7c7c"/><path d="M756.5,466 v6.5 h8 v-6.5" stroke="#7c7c7c"/><path d="M759,467v4M761.5,467v4" stroke="#7c7c7c" stroke-width=".8"/>
  <g fill="#3c3c3c"><rect x="790" y="472" width="2" height="2"/><rect x="787" y="472" width="2" height="2"/><rect x="784" y="472" width="2" height="2"/><rect x="790" y="469" width="2" height="2"/><rect x="787" y="469" width="2" height="2"/><rect x="790" y="466" width="2" height="2"/></g>
  <!-- ADJUSTMENT ICONS row1 -->
  <g stroke="#d0d0d0">
   <circle cx="601.5" cy="533" r="3.5" fill="#9a9a9a"/><path d="M601.5,525v3M601.5,538v3M593.5,533h3M606.5,533h3M596,527.5l2,2M605,536.5l2,2M607,527.5l-2,2M598,536.5l-2,2"/>
   <path d="M617,538.5h19" /><path d="M618.5,538v-6M620.5,538v-8M622.5,538v-5M624.5,538v-10M626.5,538v-7M628.5,538v-11M630.5,538v-6M632.5,538v-9M634.5,538v-5" stroke="#c8c8c8"/>
   <rect x="642.5" y="527.5" width="15" height="12" fill="#6a6a6a"/><path d="M643,534h15M648.5,528v12M653.5,528v12" stroke="#a8a8a8" stroke-width=".8"/><path d="M643,539 C651,539 650,528 658,528" stroke="#f0f0f0" stroke-width="1.2"/>
   <rect x="666.5" y="527.5" width="16" height="12" fill="#5a5a5a"/><path d="M667,539.5 L682,528 V539.5 Z" fill="#bdbdbd" stroke="none"/><path d="M669,531.5h4M671,529.5v4M676,536.5h4" stroke="#f0f0f0"/>
   <path d="M690,526.5 h16 l-8,14 Z" fill="url(#ig3)" />
  </g>
  <!-- row2 -->
  <g stroke="#d0d0d0">
   <rect x="582.5" y="554.5" width="15" height="12" fill="#707070"/><path d="M583,559.5h15"/><rect x="583" y="560" width="14" height="6" fill="url(#ig1)" stroke="none"/><path d="M586.5,555v4M590.5,555v4M594.5,555v4" stroke="#a0a0a0"/>
   <path d="M613.5,554v11M609,566.5h9M606,557.5h15" /><path d="M605.5,563.5 l2.5,-5 l2.5,5 Z M616.5,563.5 l2.5,-5 l2.5,5 Z" fill="#bcbcbc"/>
   <rect x="630.5" y="554.5" width="15" height="12" fill="#d0d0d0"/><rect x="631" y="555" width="7" height="11" fill="#3c3c3c" stroke="none"/>
   <rect x="653.5" y="556.5" width="12" height="8" fill="#b0b0b0"/><rect x="656" y="554" width="4" height="3" fill="#c8c8c8" stroke="none"/><circle cx="659.5" cy="560.5" r="2" fill="#555"/><circle cx="665.5" cy="563" r="4.5" fill="#9c9c9c"/>
   <circle cx="686" cy="558.5" r="4.2" fill="#e0e0e0"/><circle cx="682" cy="564" r="4.2" fill="#a0a0a0"/><circle cx="690" cy="564" r="4.2" fill="#c4c4c4"/>
   <rect x="702.5" y="554.5" width="15" height="12" fill="#7c7c7c"/><path d="M703,558.5h15M703,562.5h15M707.5,555v12M712.5,555v12"/>
  </g>
  <!-- row3 -->
  <g stroke="#d0d0d0">
   <rect x="594.5" y="581.5" width="15" height="12" fill="#8a8a8a"/><ellipse cx="602" cy="587.5" rx="4.5" ry="3" transform="rotate(-30 602 587.5)" fill="#444" stroke="none"/>
   <rect x="618.5" y="581.5" width="15" height="12" fill="url(#ig2)"/>
   <rect x="642.5" y="581.5" width="15" height="12" fill="#c8c8c8"/><path d="M643,592 l3,-3 l2,1 l3,-4 l2,1 l4,-5 v11 h-14 Z" fill="#444" stroke="none"/>
   <rect x="666.5" y="581.5" width="15" height="12" fill="#8c8c8c"/><path d="M667,582 l7.5,6 l7.5,-6 M667,593 l7.5,-5 l7.5,5" stroke="#d8d8d8" stroke-width=".9"/><path d="M667,582 l7.5,6 l-7.5,5 Z" fill="#666" stroke="none"/>
   <rect x="690.5" y="581.5" width="15" height="12" fill="url(#ig1)"/>
  </g>
  <!-- LAYERS filter row -->
  <circle cx="561.5" cy="660" r="3" stroke="#b8b8b8" stroke-width="1.2"/><path d="M559.5,662.5 l-3,3" stroke="#b8b8b8" stroke-width="1.4"/>
  <path d="M610,660 l3,-3.5 l3,3.5 Z M610,663 l3,3.5 l3,-3.5 Z" fill="#d8d8d8"/>
  <g stroke="#9c9c9c">
   <rect x="641.5" y="656.5" width="12" height="9"/><path d="M643,664 l3,-4 l2,2 l2,-3 l3,5" fill="#8a8a8a" stroke="none"/><path d="M641,667.5h13"/>
   <circle cx="671" cy="661.5" r="5" fill="#6e6e6e"/><path d="M667.5,665 a5,5 0 0 1 7,-7 Z" fill="#a8a8a8" stroke="none"/>
   <path d="M713.5,656.5 h12 v10 h-12 Z"/><g fill="#a8a8a8" stroke="none"><rect x="712" y="655" width="3" height="3"/><rect x="724" y="655" width="3" height="3"/><rect x="712" y="665" width="3" height="3"/><rect x="724" y="665" width="3" height="3"/></g>
   <path d="M738.5,661.5 v6 h7 v-6 Z" fill="#8a8a8a"/><path d="M743.5,655.5 h4 l3,3 v7 h-4 v-5 h-3 Z" fill="#777"/>
  </g>
  <rect x="772.5" y="653.5" width="8" height="16" rx="1.5" fill="#444" stroke="#3a3a3a"/><rect x="774" y="655" width="5" height="5" fill="#6a6a6a"/>
  <!-- blend arrows -->
  <path d="M650,688 l3,-3.5 l3,3.5 Z M650,691 l3,3.5 l3,-3.5 Z" fill="#d8d8d8"/>
  <path d="M767,688 h7 l-3.5,3.5 Z M767,716 h7 l-3.5,3.5 Z" fill="#d8d8d8"/>
  <!-- lock icons -->
  <rect x="589.5" y="711.5" width="11" height="11" fill="#7a7a7a" stroke="#9a9a9a"/><path d="M590,712h3.5v3.5h-3.5z M597,712h3.5v3.5h-3.5z M593.5,715.5h3.5v3.5h-3.5z M590,719h3.5v3.5h-3.5z M597,719h3.5v3.5h-3.5z" fill="#b8b8b8"/>
  <path d="M624.5,710.5 L616,719" stroke="#a8a8a8" stroke-width="1.6"/><path d="M616.5,718 l2,2 c-1.5,2.5 -5,3 -8,2.5 c2.5,-1 3.5,-3 6,-4.5 Z" fill="#b0b0b0"/>
  <path d="M639,711.5v11M633.5,717h11" stroke="#a8a8a8"/><path d="M639,710 l-2,2.5 h4z M639,724 l-2,-2.5 h4z M632,717 l2.5,-2 v4z M646,717 l-2.5,-2 v4z" fill="#a8a8a8"/>
  <rect x="656.5" y="716.5" width="10" height="7" fill="#8c8c8c" stroke="#9c9c9c"/><path d="M658.5,716.5 v-2.5 a3,3 0 0 1 6,0 v2.5" stroke="#9c9c9c" stroke-width="1.3"/>
  <!-- layer row: eye, lock -->
  <path d="M553.5,753 c3,-4.5 10,-4.5 13,0 c-3,4.5 -10,4.5 -13,0 Z" fill="#c8c8c8" stroke="#e0e0e0" stroke-width=".8"/><circle cx="560" cy="753" r="2.6" fill="#3c3c3c"/><circle cx="560" cy="753" r="1" fill="#ddd"/>
  <rect x="753.5" y="751.5" width="10" height="8" fill="#566584" stroke="#e4e4e4"/><path d="M755.5,751.5 v-2.5 a3,3 0 0 1 6,0 v2.5" stroke="#e4e4e4" stroke-width="1.2"/><rect x="758" y="754" width="1.5" height="3" fill="#e4e4e4"/>
  <path d="M673.5,782 a5,5 0 0 1 10,0 Z M685.5,782 a5,5 0 0 1 10,0 Z" fill="#d8d8d8"/>
 </svg>
 <div class="t" style="left:689px;top:653px;font-family:'Liberation Serif',serif;font-weight:bold;font-size:15px;line-height:16px;color:#9c9c9c;">T</div>
 <!--/RPI-->
</div>
</body>
</html>
